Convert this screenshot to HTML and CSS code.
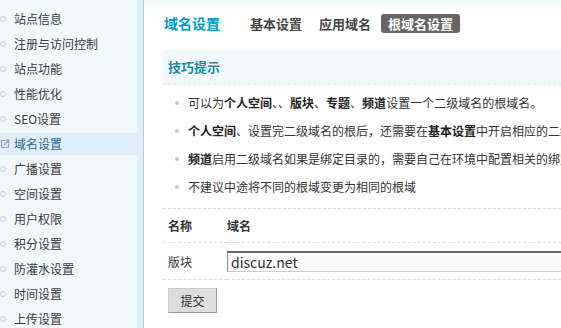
FILE: index.html
```html
<!DOCTYPE html>
<html lang="zh-CN">
<head>
    <meta charset="UTF-8">
    <title>域名设置</title>
    <link rel="stylesheet" href="styles.css">
</head>
<body>
<div class="wall">
    <div class="side">
        <ul class="menu">
            <li>站点信息</li>
            <li>注册与访问控制</li>
            <li>站点功能</li>
            <li>性能优化</li>
            <li>SEO设置</li>
            <li class="on">
                <svg class="ico" width="10" height="10" viewBox="0 0 10 10">
                    <path d="M5.5 1.5H1.5V8.5H8.5V4.5" fill="none" stroke="#9aa4ad" stroke-width="1.2"/>
                    <path d="M4 6L8.5 1.5M6 1.2H8.8V4" fill="none" stroke="#9aa4ad" stroke-width="1.2"/>
                </svg>域名设置</li>
            <li>广播设置</li>
            <li>空间设置</li>
            <li>用户权限</li>
            <li>积分设置</li>
            <li>防灌水设置</li>
            <li>时间设置</li>
            <li>上传设置</li>
        </ul>
    </div>
    <div class="main">
        <div class="head">
            <h3>域名设置</h3>
            <ul class="tabs">
                <li>基本设置</li>
                <li>应用域名</li>
                <li class="cur">根域名设置</li>
            </ul>
        </div>
        <div class="tips">技巧提示</div>
        <ul class="tips-list">
            <li>可以为<b>个人空间</b>、、<b>版块</b>、<b>专题</b>、<b>频道</b>设置一个二级域名的根域名。</li>
            <li><b>个人空间</b>、设置完二级域名的根后，还需要在<b>基本设置</b>中开启相应的二级域名才能生效</li>
            <li><b>频道</b>启用二级域名如果是绑定目录的，需要自己在环境中配置相关的绑定</li>
            <li>不建议中途将不同的根域变更为相同的根域</li>
        </ul>
        <table class="tb">
            <colgroup>
                <col class="col-name">
                <col>
            </colgroup>
            <tr class="th">
                <td class="td-name">名称</td>
                <td>域名</td>
            </tr>
            <tr class="row">
                <td class="td-name">版块</td>
                <td><input type="text" class="txt" value="discuz.net"></td>
            </tr>
            <tr class="btn-row">
                <td colspan="2"><input type="button" class="btn" value="提交"></td>
            </tr>
        </table>
    </div>
</div>
</body>
</html>
```

FILE: styles.css
```css
html, body, .wall {
    width: 100%;
    height: 100%;
    margin: 0;
    border: 0;
    padding: 0;
}

body {
    font-family: "Noto Sans CJK SC", sans-serif;
    font-size: 12px;
    color: #333;
    overflow: hidden;
}

.wall {
    display: flex;
}

.side {
    width: 137px;
    flex: none;
    background-color: #f2f9fd;
    border-right: 6px solid #e2eff9;
    box-shadow: 1px 0 0 #b5cfd9;
}

.menu {
    list-style: none;
    margin: 0;
    padding: 8px 0 0 0;
}

.menu li {
    position: relative;
    height: 22px;
    line-height: 22px;
    margin-bottom: 3px;
    padding-left: 14px;
    white-space: nowrap;
    color: #3a3a3a;
}

.menu li::before {
    content: "";
    position: absolute;
    left: 0;
    top: 8px;
    width: 4px;
    height: 4px;
    border: 1px solid #c8d0d6;
    border-radius: 50%;
}

.menu li.on {
    background-color: #deeffa;
    color: #2b669c;
}

.menu li.on::before {
    display: none;
}

.menu .ico {
    position: absolute;
    left: 0;
    top: 6px;
}

.main {
    flex: 1;
    min-width: 0;
    overflow: hidden;
    padding-left: 19px;
    margin-left: 1px;
    background: linear-gradient(#f2f9fd, #fff 12px);
}

.head {
    display: flex;
    align-items: center;
    height: 19px;
    margin-top: 14px;
}

.head h3 {
    margin: 0 23px 0 1px;
    font-size: 14px;
    color: #0099cc;
    line-height: 19px;
}

.tabs {
    display: flex;
    list-style: none;
    margin: 0;
    padding: 0;
}

.tabs li {
    font-size: 13px;
    font-weight: bold;
    color: #444;
    line-height: 19px;
    padding: 0 7px;
    margin-right: 3px;
    border-radius: 3px;
}

.tabs li.cur {
    background-color: #666;
    color: #fff;
}

.tips {
    margin-top: 17px;
    height: 34px;
    line-height: 34px;
    padding-left: 5px;
    background-color: #f2f9fd;
    border-bottom: 1px dashed #dcebf5;
    font-size: 13px;
    font-weight: bold;
    color: #1b8aa8;
}

.tips-list {
    list-style: none;
    margin: 0;
    padding: 4px 0 7px 0;
    border-bottom: 1px dashed #ddd;
}

.tips-list li {
    position: relative;
    height: 28px;
    line-height: 28px;
    padding-left: 25px;
    white-space: nowrap;
}

.tips-list li::before {
    content: "";
    position: absolute;
    left: 12px;
    top: 12px;
    width: 4px;
    height: 4px;
    border-radius: 50%;
    background-color: #c8c8c8;
}

.tips-list b {
    color: #222;
}

.tb {
    border-collapse: collapse;
    table-layout: fixed;
    width: 100%;
}

.tb .col-name {
    width: 64px;
}

.tb td {
    padding: 0;
    white-space: nowrap;
}

.tb .td-name {
    padding-left: 5px;
}

.th td {
    height: 33px;
    font-weight: bold;
    border-bottom: 1px dashed #ddd;
}

.row td {
    height: 36px;
    border-bottom: 1px dashed #ddd;
}

.txt {
    display: block;
    width: 400px;
    height: 21px;
    box-sizing: border-box;
    margin: 0;
    padding: 0 3px;
    border: 1px solid #ccc;
    border-top: 2px solid #666;
    border-left-color: #888;
    background-color: #f9f9f9;
    font-family: "Noto Sans CJK SC", sans-serif;
    font-size: 14px;
    color: #333;
    outline: none;
}

.btn-row td {
    padding: 8px 0 0 5px;
}

.btn {
    width: 49px;
    height: 25px;
    margin: 0;
    padding: 0;
    border: 1px solid #999;
    border-top-color: #ccc;
    border-left-color: #ccc;
    background-color: #ddd;
    font-family: "Noto Sans CJK SC", sans-serif;
    font-size: 12px;
    color: #333;
}
```
